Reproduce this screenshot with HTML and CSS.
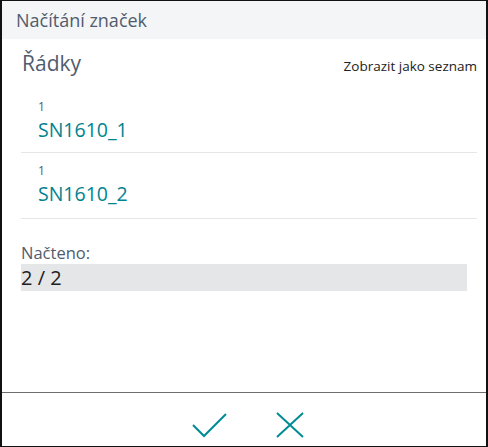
FILE: index.html
```html
<!DOCTYPE html>
<html lang="cs">
<head>
<meta charset="utf-8">
<link rel="stylesheet" href="styles.css">
</head>
<body>
<div class="dialog">
  <div class="header">Načítání značek</div>
  <div class="content">
    <div class="section-head">
      <div class="section-title">Řádky</div>
      <div class="section-link">Zobrazit jako seznam</div>
    </div>
    <div class="rows">
      <div class="row">
        <div class="qty">1</div>
        <div class="serial">SN1610_1</div>
      </div>
      <div class="row">
        <div class="qty">1</div>
        <div class="serial">SN1610_2</div>
      </div>
    </div>
    <div class="field">
      <div class="field-label">Načteno:</div>
      <div class="field-value">2 / 2</div>
    </div>
  </div>
  <div class="footer">
    <svg class="icon" width="36" height="26" viewBox="0 0 36 26"><path d="M1 13 L12 24 L34 2" fill="none" stroke="#008b95" stroke-width="2"/></svg>
    <svg class="icon" width="28" height="26" viewBox="0 0 28 26"><path d="M1 1 L27 25 M27 1 L1 25" fill="none" stroke="#008b95" stroke-width="2"/></svg>
  </div>
</div>
</body>
</html>
```
FILE: styles.css
```css
html, body {
  margin: 0;
  padding: 0;
  background: #fff;
}
body {
  font-family: "Open Sans", "Noto Sans", sans-serif;
}
.dialog {
  box-sizing: border-box;
  width: 488px;
  height: 447px;
  border: 1px solid #111;
  border-left-width: 2px;
  border-right-width: 2px;
  display: flex;
  flex-direction: column;
}
.header {
  height: 38px;
  background: #f4f5f7;
  color: #505c6d;
  font-size: 18px;
  line-height: 38px;
  padding-left: 14px;
}
.content {
  flex: 1;
  padding: 0 9px 0 19px;
}
.section-head {
  display: flex;
  justify-content: space-between;
  align-items: baseline;
  padding-top: 9px;
  height: 40px;
  box-sizing: border-box;
}
.section-title {
  font-size: 21px;
  color: #505c6d;
  line-height: 30px;
  padding-left: 1px;
}
.section-link {
  font-size: 13.5px;
  color: #212121;
}
.rows {
  margin-top: 11px;
}
.row {
  border-bottom: 1px solid #e6e6e6;
  padding: 10px 0 0 17px;
  height: 55px;
}
.row:first-child {
  height: 53px;
  padding-top: 9px;
}
.qty {
  font-size: 12px;
  color: #505c6d;
  line-height: 16px;
}
.serial {
  font-size: 19.5px;
  color: #00838f;
  line-height: 30px;
}
.field {
  margin-top: 23px;
  margin-right: 10px;
}
.field-label {
  font-size: 16.5px;
  color: #505c6d;
  line-height: 22px;
}
.field-value {
  background: #e5e6e7;
  height: 27px;
  font-size: 20px;
  line-height: 27px;
  color: #212121;
}
.footer {
  height: 54px;
  border-top: 1px solid #6e6e6e;
  display: flex;
  justify-content: center;
  align-items: flex-end;
  gap: 48px;
  padding: 0 0 8px 7px;
  box-sizing: border-box;
}
.icon {
  display: block;
}
```
